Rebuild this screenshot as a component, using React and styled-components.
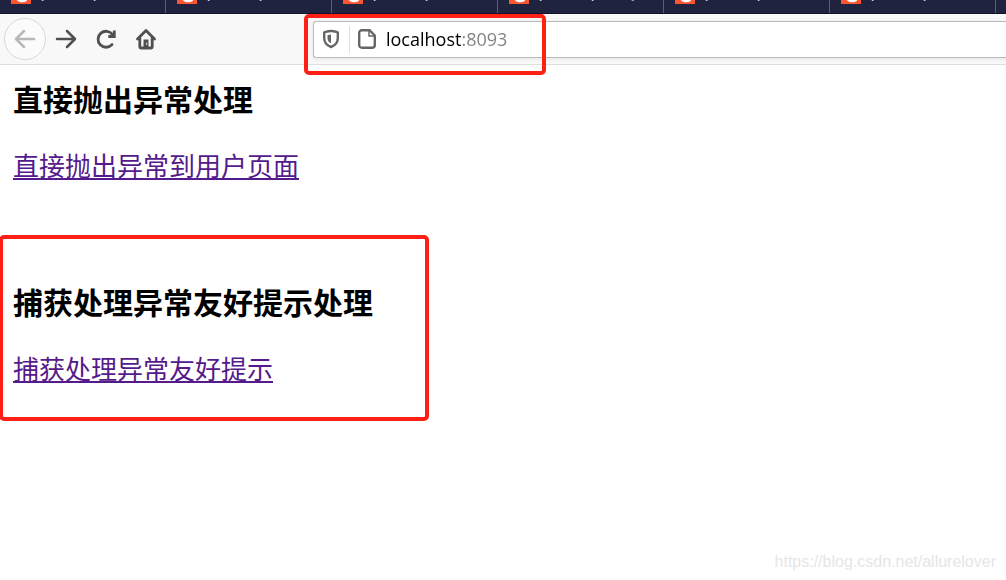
import React from "react";
import styled, { createGlobalStyle } from "styled-components";

const GlobalStyle = createGlobalStyle`
  * { box-sizing: border-box; }
  body {
    margin: 0;
    background: #fff;
    color: #000;
    font-family: "Open Sans", "Noto Sans CJK SC", sans-serif;
    overflow: hidden;
  }
`;

const Browser = styled.div`
  display: flex;
  flex-direction: column;
  min-height: 100vh;
`;

const TabStrip = styled.div`
  display: flex;
  height: 14px;
  background: #20233f;
  border-bottom: 1px solid #11132c;
  overflow: hidden;
`;

const Tab = styled.button`
  display: flex;
  align-items: flex-end;
  gap: 8px;
  flex: 0 0 166px;
  height: 13px;
  padding: 0 0 9px 11px;
  border: 0;
  border-right: 1px solid #5b5d73;
  background: transparent;
  color: #f4f4f7;
  font: 14px/22px "Liberation Sans", "Noto Sans CJK SC", sans-serif;
  white-space: pre;
  text-align: left;
`;

const Favicon = styled.svg`
  flex: none;
  width: 20px;
  height: 20px;
`;

const TabLabel = styled.span`
  height: 22px;
`;

const Faded = styled.span`
  opacity: 0.6;
`;

const Toolbar = styled.header`
  display: flex;
  align-items: center;
  height: 51px;
  padding-left: 4px;
  background: #f8f8f8;
  border-bottom: 1px solid #dedede;
`;

const NavButton = styled.button`
  display: grid;
  place-items: center;
  flex: none;
  width: ${(p) => (p.$round ? 42 : 40)}px;
  height: 42px;
  padding: 0;
  border: ${(p) => (p.$round ? "1px solid #d9d9d9" : "0")};
  border-radius: 50%;
  background: ${(p) => (p.$round ? "#fbfbfb" : "transparent")};
  color: ${(p) => (p.$round ? "#b8b8b8" : "#505050")};
`;

const Icon = styled.svg`
  display: block;
  flex: none;
  width: ${(p) => p.$size}px;
  height: ${(p) => p.$size}px;
  fill: none;
  stroke: currentColor;
  stroke-width: ${(p) => p.$weight || 2.5};
  stroke-linecap: round;
  stroke-linejoin: round;
`;

const AddressBar = styled.div`
  position: relative;
  display: flex;
  align-items: center;
  flex: 1;
  height: 37px;
  margin-left: 147px;
  padding-left: 7px;
  border: 1px solid #b9b9b9;
  border-right: 0;
  border-radius: 3px 0 0 3px;
  background: #fff;
  color: #666;
  box-shadow: 0 1px 4px rgba(0, 0, 0, 0.08);
`;

const Divider = styled.span`
  width: 1px;
  height: 27px;
  margin: 0 7px 0 8px;
  background: #dedede;
`;

const UrlInput = styled.input`
  flex: 1;
  min-width: 0;
  height: 34px;
  margin-left: 9px;
  padding: 0;
  border: 0;
  outline: 0;
  background: linear-gradient(90deg, #000 75px, #808080 75px);
  background-clip: text;
  color: transparent;
  font: 18px/24px "Open Sans", sans-serif;
`;

const UrlHighlight = styled.div`
  position: absolute;
  top: -8px;
  left: -10px;
  width: 242px;
  height: 61px;
  border: 4px solid #ff2015;
  border-radius: 5px;
  pointer-events: none;
`;

const Page = styled.main`
  flex: 1;
`;

const Section = styled.section`
  padding: 13px 13px 0;
`;

const HighlightedSection = styled.section`
  width: 430px;
  margin: 49px 0 0 -1px;
  padding: 42px 10px 28px;
  border: 4px solid #ff2015;
  border-radius: 5px;
`;

const Title = styled.h3`
  margin: 0 0 24px;
  font-size: 30px;
  line-height: 44px;
  font-weight: 700;
`;

const PageLink = styled.a`
  display: block;
  width: fit-content;
  color: #551a8b;
  font-size: 26px;
  line-height: 40px;
  text-decoration: underline;
  text-decoration-thickness: 2px;
  text-underline-offset: 2px;
  text-decoration-skip-ink: none;
`;

const Watermark = styled.footer`
  padding: 0 10px 8px;
  color: #e6e6e6;
  font: 16px/20px "Liberation Sans", sans-serif;
  text-align: right;
`;

const tabs = ["", "", "", "y", "", ""];

function BrowserTab({ tail }) {
  return (
    <Tab type="button">
      <Favicon viewBox="0 0 20 20" aria-hidden="true">
        <rect width="20" height="20" fill="#fc5531" />
        <path d="M14 5C7 3 4 8 6 13c2 4 6 4 9 2" fill="none" stroke="#fff" strokeWidth="4" />
      </Favicon>
      <TabLabel>
        (1条消息)
        {tail && <Faded>{"         " + tail}</Faded>}
      </TabLabel>
    </Tab>
  );
}

export default function App() {
  return (
    <>
      <GlobalStyle />
      <Browser>
        <TabStrip>
          {tabs.map((tail, i) => (
            <BrowserTab key={i} tail={tail} />
          ))}
        </TabStrip>
        <Toolbar>
          <NavButton type="button" $round disabled aria-label="Back">
            <Icon $size={24} viewBox="0 0 24 24">
              <path d="M21 12H4M11 4L3 12l8 8" />
            </Icon>
          </NavButton>
          <NavButton type="button" aria-label="Forward">
            <Icon $size={24} viewBox="0 0 24 24">
              <path d="M3 12h17M13 4l8 8-8 8" />
            </Icon>
          </NavButton>
          <NavButton type="button" aria-label="Reload">
            <Icon $size={24} viewBox="0 0 24 24" $weight={2.8}>
              <path d="M18 17.6A8 8 0 1 1 18.5 7.5" />
              <path d="M20.3 3.5v6h-6" strokeLinecap="butt" strokeLinejoin="miter" />
              <path d="M20.5 4v5h-5z" fill="currentColor" stroke="none" />
            </Icon>
          </NavButton>
          <NavButton type="button" aria-label="Home">
            <Icon $size={24} viewBox="0 0 24 24" $weight={2.8}>
              <path d="M3.5 12L12 3.5l8.5 8.5" />
              <path d="M5.8 11v9c0 .8.4 1 1 1h10.4c.6 0 1-.2 1-1v-9" />
              <path d="M9.5 20.5v-8h5v8z" fill="currentColor" stroke="none" />
              <path d="M12.6 16v1.6" stroke="#ddd" strokeWidth="1" />
            </Icon>
          </NavButton>
          <AddressBar>
            <Icon $size={20} $weight={2.4} viewBox="0 0 20 20">
              <path d="M10 2C7.5 2 5.3 2.7 3.2 3.3V9c0 4.6 2.8 7.6 6.8 9 4-1.4 6.8-4.4 6.8-9V3.3C14.7 2.7 12.5 2 10 2z" />
              <path d="M10 5.5v9C7.7 13 6.5 11.5 6.5 9V6.2C7.7 5.8 8.8 5.5 10 5.5z" fill="currentColor" stroke="none" />
            </Icon>
            <Divider />
            <Icon $size={20} $weight={2.4} viewBox="0 0 20 20">
              <path d="M5 1.2h7.5l5.3 5.3V16c0 1.7-1 2.8-2.8 2.8H5c-1.8 0-2.8-1.1-2.8-2.8V4C2.2 2.3 3.2 1.2 5 1.2z" />
              <path d="M12 1.5V7h5.5" strokeWidth="1.5" />
            </Icon>
            <UrlInput type="text" aria-label="Address" defaultValue="localhost:8093" spellCheck={false} />
            <UrlHighlight />
          </AddressBar>
        </Toolbar>
        <Page>
          <Section>
            <Title>直接抛出异常处理</Title>
            <PageLink href="#throw">直接抛出异常到用户页面</PageLink>
          </Section>
          <HighlightedSection>
            <Title>捕获处理异常友好提示处理</Title>
            <PageLink href="#catch">捕获处理异常友好提示</PageLink>
          </HighlightedSection>
        </Page>
        <Watermark>https://blog.csdn.net/allurelover</Watermark>
      </Browser>
    </>
  );
}
